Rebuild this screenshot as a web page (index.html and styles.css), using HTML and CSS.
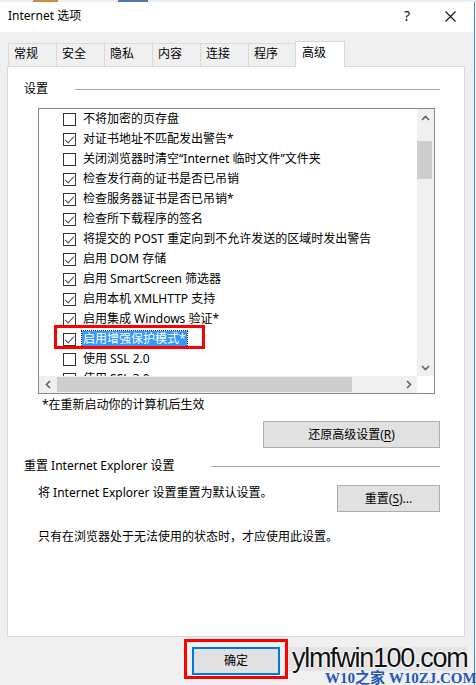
FILE: index.html
```html
<!DOCTYPE html>
<html>
<head>
  <meta charset="utf-8">
  <title>Internet 选项</title>
  <link rel="stylesheet" href="styles.css">
</head>
<body>
  <div class="strip"></div>
  <div class="window">
    <div class="titlebar">
      <span class="title">Internet 选项</span>
      <span class="help">?</span>
      <svg class="close" width="11" height="11" viewBox="0 0 11 11">
        <path d="M0.5 0.5 L10.5 10.5 M10.5 0.5 L0.5 10.5" stroke="#111" stroke-width="1.1" fill="none"/>
      </svg>
    </div>

    <div class="client">
      <div class="tabs">
        <div class="tab">常规</div>
        <div class="tab">安全</div>
        <div class="tab">隐私</div>
        <div class="tab">内容</div>
        <div class="tab">连接</div>
        <div class="tab">程序</div>
        <div class="tab active">高级</div>
      </div>

      <div class="panel">
        <div class="group-title">
          <span class="group-name">设置</span>
          <i class="rule"></i>
        </div>

        <div class="listbox">
          <div class="list-items">
            <div class="item"><span class="box"></span><span class="label">不将加密的页存盘</span></div>
            <div class="item"><span class="box on"></span><span class="label">对证书地址不匹配发出警告*</span></div>
            <div class="item"><span class="box"></span><span class="label">关闭浏览器时清空“Internet 临时文件”文件夹</span></div>
            <div class="item"><span class="box on"></span><span class="label">检查发行商的证书是否已吊销</span></div>
            <div class="item"><span class="box on"></span><span class="label">检查服务器证书是否已吊销*</span></div>
            <div class="item"><span class="box on"></span><span class="label">检查所下载程序的签名</span></div>
            <div class="item"><span class="box on"></span><span class="label">将提交的 POST 重定向到不允许发送的区域时发出警告</span></div>
            <div class="item"><span class="box on"></span><span class="label">启用 DOM 存储</span></div>
            <div class="item"><span class="box on"></span><span class="label">启用 SmartScreen 筛选器</span></div>
            <div class="item"><span class="box on"></span><span class="label">启用本机 XMLHTTP 支持</span></div>
            <div class="item"><span class="box on"></span><span class="label">启用集成 Windows 验证*</span></div>
            <div class="item marked"><span class="box on"></span><span class="label selected">启用增强保护模式*</span><span class="redbox"></span></div>
            <div class="item"><span class="box"></span><span class="label">使用 SSL 2.0</span></div>
            <div class="item"><span class="box"></span><span class="label">使用 SSL 3.0</span></div>
          </div>

          <div class="vscroll">
            <div class="arrow">
              <svg width="9" height="6" viewBox="0 0 9 6"><path d="M1 5 L4.5 1.5 L8 5" stroke="#606060" stroke-width="1.6" fill="none"/></svg>
            </div>
            <div class="track"><div class="thumb"></div></div>
            <div class="arrow">
              <svg width="9" height="6" viewBox="0 0 9 6"><path d="M1 1 L4.5 4.5 L8 1" stroke="#606060" stroke-width="1.6" fill="none"/></svg>
            </div>
          </div>

          <div class="hscroll">
            <div class="arrow">
              <svg width="6" height="9" viewBox="0 0 6 9"><path d="M5 1 L1.5 4.5 L5 8" stroke="#606060" stroke-width="1.6" fill="none"/></svg>
            </div>
            <div class="track"><div class="thumb"></div></div>
            <div class="arrow">
              <svg width="6" height="9" viewBox="0 0 6 9"><path d="M1 1 L4.5 4.5 L1 8" stroke="#606060" stroke-width="1.6" fill="none"/></svg>
            </div>
          </div>

          <div class="corner"></div>
        </div>

        <p class="note">*在重新启动你的计算机后生效</p>

        <div class="btn-row">
          <button class="btn restore">还原高级设置(<u>R</u>)</button>
        </div>

        <div class="group-title reset-title">
          <span class="group-name wide">重置 Internet Explorer 设置</span>
          <i class="rule"></i>
        </div>

        <div class="reset-row">
          <p>将 Internet Explorer 设置重置为默认设置。</p>
          <button class="btn reset">重置(<u>S</u>)...</button>
        </div>

        <p class="hint">只有在浏览器处于无法使用的状态时，才应使用此设置。</p>
      </div>

      <div class="footer">
        <div class="ok-mark">
          <button class="btn ok">确定</button>
        </div>
        <div class="watermark">
          <div class="wm-big">ylmfwin100.com</div>
          <div class="wm-small">W10之家 W10ZJ.COM</div>
        </div>
      </div>
    </div>
  </div>
</body>
</html>
```

FILE: styles.css
```css
* {
  margin: 0;
  padding: 0;
  box-sizing: border-box;
}
html, body {
  width: 476px;
  height: 685px;
  overflow: hidden;
  background: #fff;
}
body {
  font-family: "Noto Sans", "Noto Sans CJK SC", sans-serif;
  font-size: 12px;
  line-height: 16px;
  color: #000;
}

.strip {
  height: 2px;
  background: linear-gradient(to right, #ececec 0 33px, #c98a4a 33px 58px, #efefef 58px 118px, #4f77a8 118px 148px, #e9eef4 148px);
}

.window {
  width: 475px;
  height: 683px;
  border-right: 1px solid #3d8ee0;
  display: flex;
  flex-direction: column;
}

/* title bar */
.titlebar {
  height: 30px;
  background: #fff;
  display: flex;
  align-items: center;
  padding: 0 18px 2px 8px;
}
.title {
  flex: 1;
}
.help {
  font-size: 14px;
  margin-right: 35px;
  color: #111;
}
.close {
  display: block;
}

.client {
  flex: 1;
  background: #f0f0f0;
  padding: 9px 0 0 7px;
}

/* tabs */
.tabs {
  height: 25px;
  display: flex;
  align-items: flex-end;
  padding-left: 1px;
  position: relative;
  z-index: 1;
}
.tab {
  width: 48px;
  height: 23px;
  border: 1px solid #d9d9d9;
  border-bottom: 0;
  border-right: 0;
  padding: 2px 0 0 5px;
  background: #f0f0f0;
}
.tab.active {
  width: 50px;
  height: 26px;
  margin-left: -1px;
  margin-bottom: -1px;
  border-right: 1px solid #d9d9d9;
  padding: 3px 0 0 6px;
  background: #fff;
}

/* panel */
.panel {
  width: 458px;
  height: 571px;
  border: 1px solid #d9d9d9;
  background: #fff;
  padding: 0 24px 0 16px;
  display: flex;
  flex-direction: column;
}
.group-title {
  display: flex;
  align-items: center;
  margin-top: 14px;
  height: 16px;
}
.group-name {
  margin-right: 27px;
}
.group-name.wide {
  width: 187px;
  margin-right: 0;
}
.rule {
  flex: 1;
  height: 1px;
  background: #a8a8a8;
}

/* list box */
.listbox {
  margin: 11px 0 0 14px;
  width: 397px;
  height: 286px;
  border: 1px solid #828790;
  display: grid;
  grid-template-columns: 1fr 17px;
  grid-template-rows: 1fr 17px;
  overflow: hidden;
}
.list-items {
  overflow: hidden;
}
.item {
  height: 20px;
  display: flex;
  align-items: center;
  padding-left: 24px;
  white-space: nowrap;
  position: relative;
}
.box {
  width: 13px;
  height: 13px;
  border: 1px solid #333;
  background: #fff;
  margin-right: 6px;
  flex: none;
  position: relative;
}
.box.on::after {
  content: "";
  position: absolute;
  left: 3px;
  top: 0px;
  width: 4px;
  height: 8px;
  border-right: 1px solid #444;
  border-bottom: 1px solid #444;
  transform: rotate(42deg);
}
.label {
  padding: 0 1px;
  line-height: 16px;
}
.label.selected {
  background: #3399ff;
  color: #fff;
  outline: 1px dotted #222;
}
.redbox {
  position: absolute;
  left: 15px;
  top: -4px;
  width: 151px;
  height: 24px;
  border: 3px solid #f00;
}

.vscroll {
  background: #f0f0f0;
  display: flex;
  flex-direction: column;
}
.vscroll .arrow {
  height: 17px;
  display: flex;
  align-items: center;
  justify-content: center;
}
.vscroll .track {
  flex: 1;
}
.vscroll .thumb {
  width: 15px;
  height: 38px;
  margin-top: 15px;
  background: #cdcdcd;
}
.hscroll {
  background: #f0f0f0;
  display: flex;
}
.hscroll .arrow {
  width: 17px;
  display: flex;
  align-items: center;
  justify-content: center;
}
.hscroll .track {
  flex: 1;
}
.hscroll .thumb {
  width: 295px;
  height: 15px;
  margin: 1px 0 0 1px;
  background: #cdcdcd;
}
.corner {
  background: #fff;
}

.note {
  margin: 3px 0 0 18px;
}

/* buttons */
.btn {
  font-family: "Noto Sans", "Noto Sans CJK SC", sans-serif;
  font-size: 12px;
  line-height: 16px;
  color: #000;
  background: #e1e1e1;
  border: 1px solid #adadad;
}
.btn u {
  text-underline-offset: 2px;
}
.btn-row {
  display: flex;
  justify-content: flex-end;
  margin-top: 8px;
}
.restore {
  width: 177px;
  height: 27px;
}

.reset-title {
  margin-top: 10px;
}
.reset-row {
  margin: 11px 0 0 14px;
  display: flex;
  justify-content: space-between;
  align-items: flex-start;
}
.reset {
  width: 103px;
  height: 27px;
}
.hint {
  margin: 17px 0 0 14px;
}

/* footer */
.footer {
  position: relative;
  height: 48px;
}
.ok-mark {
  position: absolute;
  left: 177px;
  top: 2px;
  width: 104px;
  height: 40px;
  border: 3px solid #f00;
  padding: 5px;
}
.ok {
  width: 88px;
  height: 28px;
  border: 2px solid #0078d7;
}

.watermark {
  position: absolute;
  left: 282px;
  top: 10px;
  width: 178px;
  height: 38px;
}
.wm-big {
  height: 24px;
  background: #e4e4e4;
  font-family: "Liberation Sans", Arial, sans-serif;
  font-size: 27px;
  line-height: 22px;
  letter-spacing: -1.3px;
  padding-left: 3px;
  color: #111;
  text-shadow: 0 0 2px #fff, 0 0 2px #fff, 0 0 2px #fff;
  white-space: nowrap;
}
.wm-small {
  margin-left: 36px;
  font-family: "Liberation Serif", "Noto Sans CJK SC", serif;
  font-weight: bold;
  font-size: 15px;
  line-height: 14px;
  color: #2457b8;
  white-space: nowrap;
}
```
